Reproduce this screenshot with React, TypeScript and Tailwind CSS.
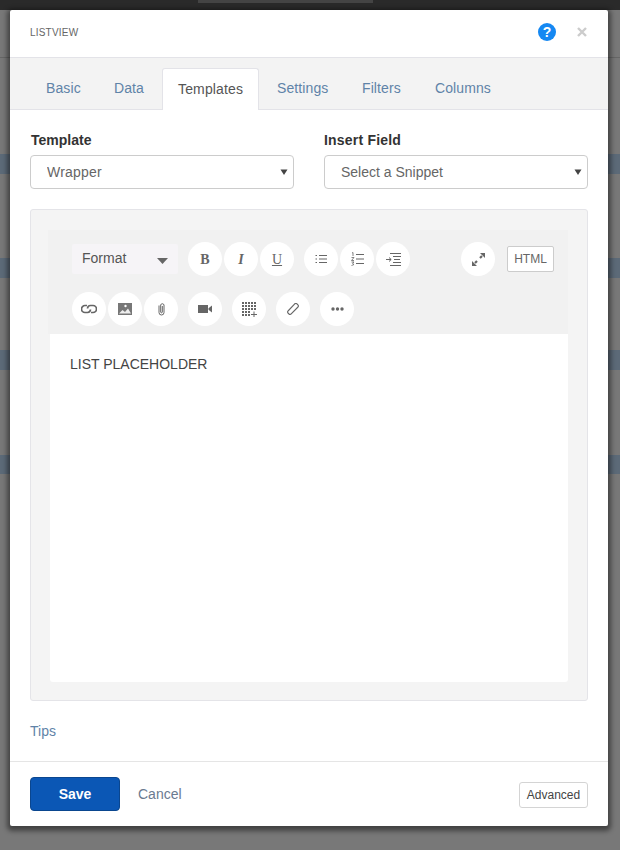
import React from "react";

const Round = ({ children, className = "" }: { children: React.ReactNode; className?: string }) => (
  <button className={`flex h-[34px] w-[34px] shrink-0 items-center justify-center rounded-full bg-white text-[#666] ${className}`}>
    {children}
  </button>
);

const Ico = ({ children, w = 16, h = 16 }: { children: React.ReactNode; w?: number; h?: number }) => (
  <svg width={w} height={h} viewBox={`0 0 ${w} ${h}`} fill="none" stroke="#666" strokeWidth="1">
    {children}
  </svg>
);

const Arrow = () => (
  <svg className="pointer-events-none absolute right-[6px] top-[13px]" width="8" height="8" viewBox="0 0 8 8">
    <path d="M0.5 1.5H7.5L4 7Z" fill="#444" />
  </svg>
);

const tabs = [
  { label: "Basic", cls: "w-[66px]" },
  { label: "Data", cls: "w-[62px]" },
  { label: "Templates", cls: "w-[97px]" },
  { label: "Settings", cls: "w-[83px]" },
  { label: "Filters", cls: "w-[71px]" },
  { label: "Columns", cls: "w-[89px]" },
];

export default function App() {
  return (
    <div className="relative h-[850px] w-[620px] overflow-hidden bg-[#787878] font-['Liberation_Sans',Arial,sans-serif]">
      {/* dimmed page behind the dialog */}
      <div className="flex h-[10px] justify-center bg-[#2a2a2a]">
        <div className="mr-[50px] h-[3px] w-[175px] bg-[#444]" />
      </div>
      <div className="mt-[47px] h-px bg-[#666]" />
      <div className="mt-[96px] h-[20px] bg-[#5c6a78]" />
      <div className="mt-[84px] h-[20px] bg-[#5c6a78]" />
      <div className="mt-[72px] h-[20px] bg-[#5c6a78]" />
      <div className="mt-[85px] h-[19px] bg-[#5c6a78]" />

      {/* dialog */}
      <div className="absolute left-[10px] top-[10px] flex h-[816px] w-[598px] flex-col rounded-[2px] bg-white shadow-[0_2px_5px_3px_rgba(0,0,0,0.45)]">
        <header className="flex h-[47px] shrink-0 items-center pb-[3px] pl-[20px] pr-[20px]">
          <span className="text-[10px] tracking-[0.2px] text-[#666]">LISTVIEW</span>
          <span className="ml-auto flex h-[18px] w-[18px] items-center justify-center rounded-full bg-[#1588f2] text-[14px] font-bold leading-none text-white">
            ?
          </span>
          <svg className="ml-[21px] mr-[1px]" width="10" height="10" viewBox="0 0 10 10" stroke="#cccccc" strokeWidth="2.4">
            <path d="M1 1L9 9M9 1L1 9" />
          </svg>
        </header>

        <nav className="flex h-[53px] shrink-0 items-end gap-[2px] border-y border-[#e3e3e8] bg-[#f3f3f3] pl-[20px]">
          {tabs.map((t) =>
            t.label === "Templates" ? (
              <span
                key={t.label}
                className={`-mb-px flex h-[42px] items-center rounded-t-[3px] border border-b-0 border-[#e3e3e8] bg-white pl-[15px] text-[14px] tracking-[0.15px] text-[#555] ${t.cls}`}
              >
                {t.label}
              </span>
            ) : (
              <span key={t.label} className={`flex h-[42px] items-center pl-[16px] text-[14px] tracking-[0.1px] text-[#5f83a8] ${t.cls}`}>
                {t.label}
              </span>
            ),
          )}
        </nav>

        <main className="flex flex-1 flex-col px-[20px]">
          <div className="mt-[22px] grid grid-cols-2 gap-[30px]">
            <label className="block">
              <span className="block pl-px text-[14px] font-bold leading-[16px] text-[#333]">Template</span>
              <span className="relative mt-[7px] block">
                <select className="h-[34px] w-full appearance-none rounded-[4px] border border-[#ccc] bg-white pl-[16px] text-[14px] tracking-[0.2px] text-[#666]">
                  <option>Wrapper</option>
                </select>
                <Arrow />
              </span>
            </label>
            <label className="block">
              <span className="block text-[14px] font-bold leading-[16px] tracking-[0.2px] text-[#333]">Insert Field</span>
              <span className="relative mt-[7px] block">
                <select className="h-[34px] w-full appearance-none rounded-[4px] border border-[#ccc] bg-white pl-[16px] text-[14px] text-[#666]">
                  <option>Select a Snippet</option>
                </select>
                <Arrow />
              </span>
            </label>
          </div>

          <section className="mt-[20px] flex h-[492px] flex-col rounded-[3px] border border-[#e4e4e8] bg-[#f4f4f4] pb-[18px] pl-[17px] pr-[19px] pt-[20px]">
            <div className="h-[104px] shrink-0 bg-[#f1f1f1] pl-[24px]">
              <div className="flex h-[54px] items-center pt-[4px]">
                <div className="flex h-[30px] w-[106px] items-center justify-between rounded-[2px] bg-[#f6f4f7] pl-[10px] pr-[10px] text-[14px] text-[#555]">
                  <span className="-mt-[2px]">Format</span>
                  <svg width="11" height="6" viewBox="0 0 11 6" className="mt-[3px]">
                    <path d="M0 0H11L5.5 6Z" fill="#666" />
                  </svg>
                </div>
                <Round className="ml-[10px]">
                  <span className="font-['Liberation_Serif',serif] text-[14px] font-bold">B</span>
                </Round>
                <Round className="ml-[2px]">
                  <span className="font-['Liberation_Serif',serif] text-[14px] font-bold italic">I</span>
                </Round>
                <Round className="ml-[2px]">
                  <span className="font-['Liberation_Serif',serif] text-[14px] underline">U</span>
                </Round>
                <Round className="ml-[10px]">
                  <Ico w={12} h={12}>
                    <path d="M4 2.5H12M4 6H12M4 9.5H12" />
                    <path d="M0.5 2.5H2M0.5 6H2M0.5 9.5H2" strokeWidth="1.2" />
                  </Ico>
                </Round>
                <Round className="ml-[2px]">
                  <Ico w={13} h={14}>
                    <path d="M5 2.5H13M5 7H13M5 11.5H13" />
                    <path d="M1 1L2 0.5V4M0.5 5.5H3L0.5 8.5H3M0.5 10H3L1.5 11.3L3 12.5L0.5 13.5" strokeWidth="0.8" />
                  </Ico>
                </Round>
                <Round className="ml-[2px]">
                  <Ico w={15} h={13}>
                    <path d="M4 0.5H15M7 3.5H15M8 6.5H14M7 9.5H15M4 12.5H15" strokeWidth="1.2" />
                    <path d="M0 6.5H5M3 4.5L5.2 6.5L3 8.5" />
                  </Ico>
                </Round>
                <Round className="ml-[51px]">
                  <Ico w={15} h={15}>
                    <path d="M9 1H14V6Z M6 14H1V9Z" fill="#666" stroke="none" />
                    <path d="M11 4L9 6M4 11L6 9" strokeWidth="2.2" />
                  </Ico>
                </Round>
                <span className="ml-[12px] flex h-[26px] w-[47px] items-center justify-center rounded-[2px] border border-[#ccc] bg-white text-[12px] text-[#666]">
                  HTML
                </span>
              </div>
              <div className="mt-[8px] flex h-[34px] items-center">
                <Round>
                  <Ico w={16} h={10}>
                    <path d="M6 1.5H4A3.5 3.5 0 0 0 4 8.5H6.5A3.2 3.2 0 0 0 9.5 5.5" strokeWidth="1.7" />
                    <path d="M10 8.5H12A3.5 3.5 0 0 0 12 1.5H9.5A3.2 3.2 0 0 0 6.5 4.5" strokeWidth="1.7" />
                  </Ico>
                </Round>
                <Round className="ml-[2px]">
                  <Ico w={14} h={12}>
                    <path d="M0 0H14V12H0Z" fill="#777" stroke="none" />
                    <path d="M1 10.5L4.5 7L7 9L10 5.5L13 10.5Z" fill="#eee" stroke="none" />
                    <circle cx="7.5" cy="3" r="1.2" fill="#fff" stroke="none" />
                  </Ico>
                </Round>
                <Round className="ml-[2px]">
                  <Ico w={9} h={14}>
                    <path d="M2 3.5V10.5A2.5 2.5 0 0 0 7 10.5V3A1.7 1.7 0 0 0 3.7 3V10A.8 .8 0 0 0 5.3 10V4" strokeWidth="1" />
                  </Ico>
                </Round>
                <Round className="ml-[10px]">
                  <Ico w={14} h={10}>
                    <path d="M0 1H10V9H0Z" fill="#666" stroke="none" />
                    <path d="M10.5 4.2L14 1.5V8.5L10.5 5.8Z" fill="#666" stroke="none" />
                  </Ico>
                </Round>
                <Round className="ml-[10px]">
                  <svg width="15" height="15" viewBox="0 0 15 15" fill="#666">
                    {[0, 3, 6, 9, 12].flatMap((y) =>
                      [0, 3, 6, 9, 12].map((x) =>
                        y >= 9 && x >= 9 ? null : <rect key={`${x}-${y}`} x={x} y={y} width="2" height="2" />,
                      ),
                    )}
                    <path d="M9 12H15V13H9ZM11.5 9.5H12.5V15H11.5Z" />
                  </svg>
                </Round>
                <Round className="ml-[10px]">
                  <Ico w={12} h={12}>
                    <path d="M1 8L7.5 1.2A1.5 1.5 0 0 1 10 1L11 2A1.5 1.5 0 0 1 11 4L4.2 10.8A1.5 1.5 0 0 1 2 11L1 10A1.4 1.4 0 0 1 1 8Z" strokeWidth="1.1" />
                  </Ico>
                </Round>
                <Round className="ml-[10px]">
                  <svg width="13" height="4" viewBox="0 0 13 4" fill="#666">
                    <circle cx="2" cy="2" r="1.7" />
                    <circle cx="6.5" cy="2" r="1.7" />
                    <circle cx="11" cy="2" r="1.7" />
                  </svg>
                </Round>
              </div>
            </div>
            <div className="ml-[2px] flex-1 rounded-b-[3px] bg-white pl-[20px] pt-[22px] text-[14px] leading-[16px] text-[#444]">
              LIST PLACEHOLDER
            </div>
          </section>

          <a className="mt-[22px] block text-[14px] leading-[16px] text-[#5f83a8]">Tips</a>
        </main>

        <footer className="flex h-[65px] shrink-0 items-center border-t border-[#e5e5e5] px-[20px]">
          <button className="h-[34px] w-[90px] rounded-[4px] border border-[#0a468f] bg-[#0b57b5] text-[14px] font-bold text-white">
            Save
          </button>
          <span className="ml-[18px] text-[14px] text-[#6a7a90]">Cancel</span>
          <button className="ml-auto mt-[2px] h-[26px] w-[69px] rounded-[3px] border border-[#d4d4d4] bg-white text-[12px] text-[#444]">
            Advanced
          </button>
        </footer>
      </div>
    </div>
  );
}
